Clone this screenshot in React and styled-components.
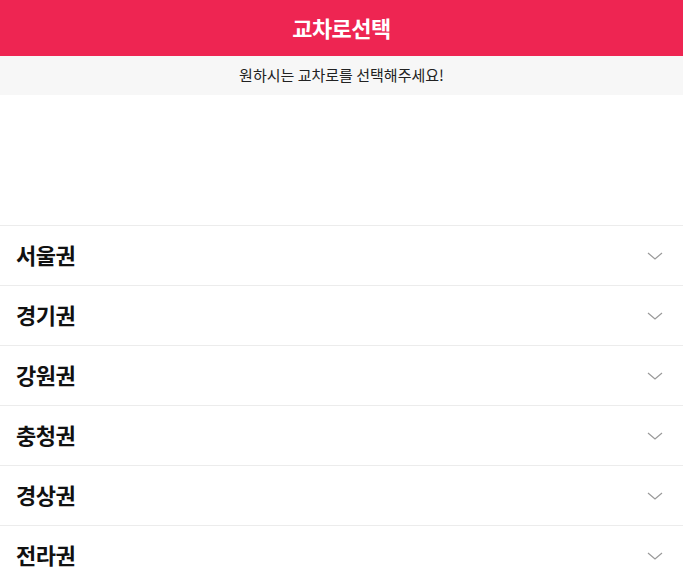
import React from "react";
import styled, { createGlobalStyle } from "styled-components";

const GlobalStyle = createGlobalStyle`
  html, body {
    margin: 0;
    padding: 0;
    background: #fff;
  }
  body {
    font-family: "Noto Sans CJK KR", "Noto Sans", sans-serif;
    color: #111;
  }
`;

const Page = styled.div`
  width: 100%;
`;

const Header = styled.header`
  height: 56px;
  background: #ee2552;
  display: flex;
  align-items: center;
  justify-content: center;
  h1 {
    margin: 0 0 3px;
    color: #fff;
    font-size: 22px;
    font-weight: 700;
    letter-spacing: -0.5px;
  }
`;

const Notice = styled.div`
  height: 39px;
  background: #f7f7f7;
  display: flex;
  align-items: center;
  justify-content: center;
  font-size: 15px;
  color: #222;
  padding-bottom: 2px;
  box-sizing: border-box;
`;

const Blank = styled.div`
  height: 130px;
`;

const RegionList = styled.ul`
  list-style: none;
  margin: 0;
  padding: 0;
  border-top: 1px solid #ececec;
`;

const Row = styled.li`
  height: 59px;
  border-bottom: 1px solid #ececec;
  display: flex;
  align-items: center;
  justify-content: space-between;
  padding: 0 20px 0 16px;
  cursor: pointer;
`;

const RegionName = styled.span`
  font-size: 22px;
  line-height: 1;
  font-weight: 700;
  letter-spacing: -0.5px;
  color: #111;
  margin-bottom: 4px;
`;

const Chevron = () => (
  <svg width="16" height="8" viewBox="0 0 16 8" fill="none">
    <path d="M1 1l7 6 7-6" stroke="#9a9a9a" strokeWidth="1.2" />
  </svg>
);

const regions = ["서울권", "경기권", "강원권", "충청권", "경상권", "전라권"];

export default function App() {
  return (
    <Page>
      <GlobalStyle />
      <Header>
        <h1>교차로선택</h1>
      </Header>
      <Notice>원하시는 교차로를 선택해주세요!</Notice>
      <Blank />
      <RegionList>
        {regions.map((r) => (
          <Row key={r}>
            <RegionName>{r}</RegionName>
            <Chevron />
          </Row>
        ))}
      </RegionList>
    </Page>
  );
}
